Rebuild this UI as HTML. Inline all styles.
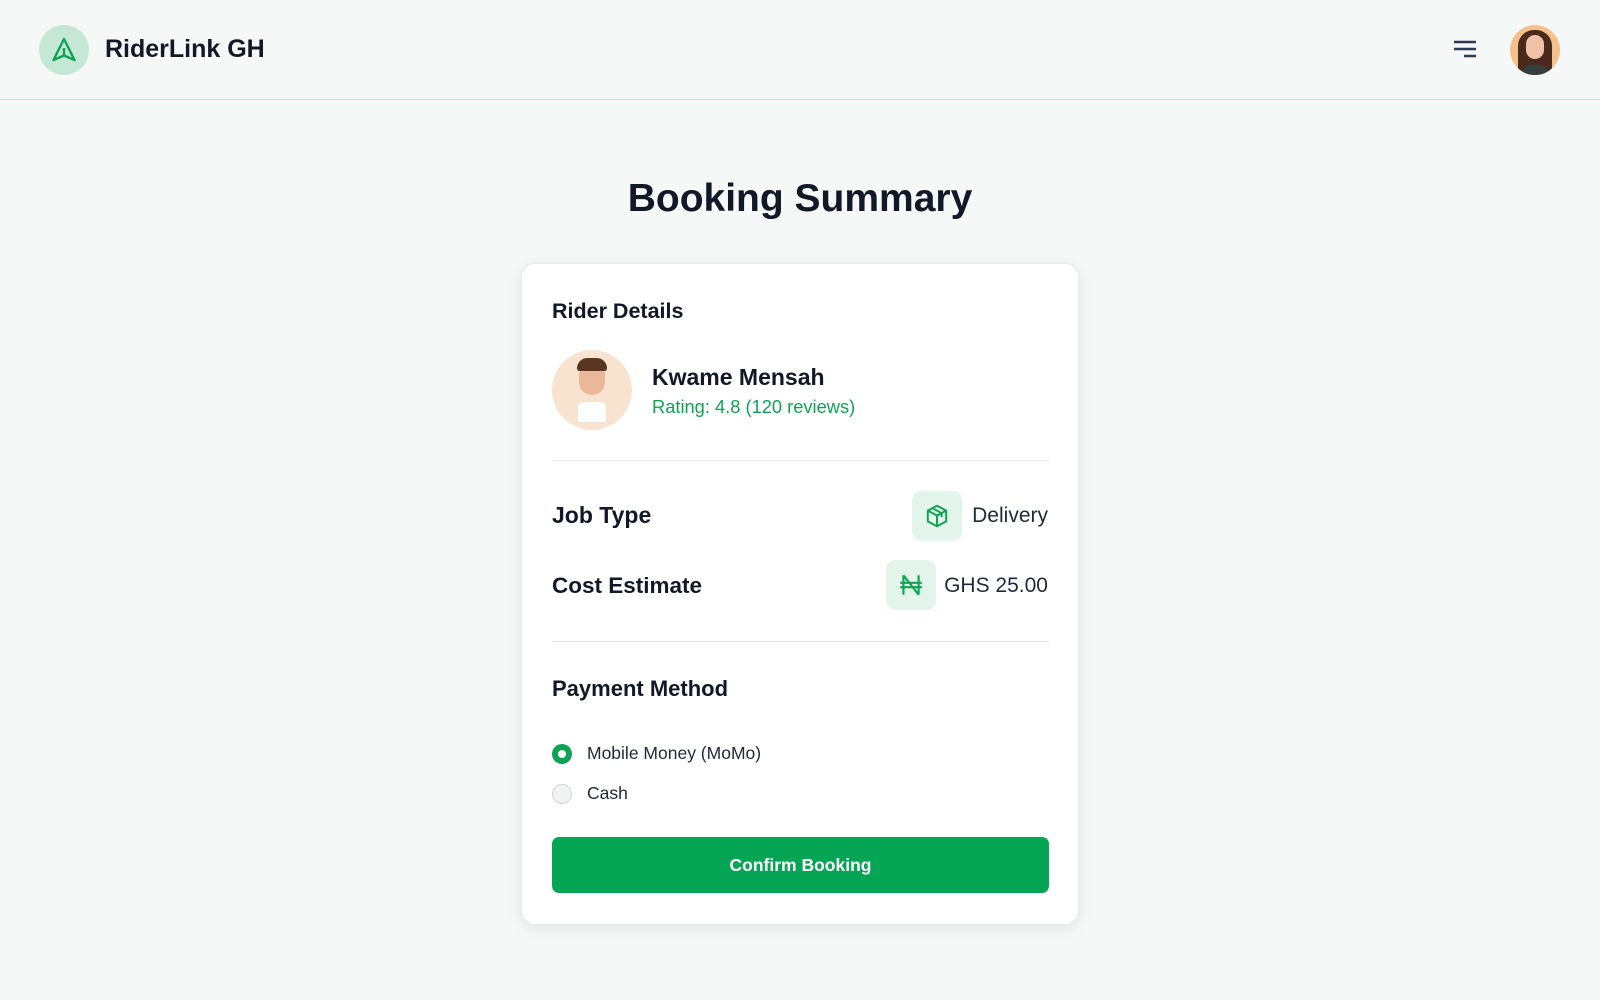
<!DOCTYPE html>
<html><head><meta charset="utf-8"><style>
*{margin:0;padding:0;box-sizing:border-box}
body{width:1600px;height:1000px;background:#f6f7f7;font-family:"Liberation Sans",sans-serif;color:#111827;position:relative;overflow:hidden}
.hdr{position:absolute;left:0;top:0;width:1600px;height:100px;border-bottom:1px solid #bfe6d1}
.abs{position:absolute}
.card{position:absolute;left:521px;top:263px;width:558px;height:662px;background:#fff;border:1px solid #e5e7eb;border-radius:14px;box-shadow:0 4px 14px rgba(0,0,0,0.08)}
.ib{position:absolute;width:50px;height:50px;border-radius:9px;background:#e3f5eb;display:flex;align-items:center;justify-content:center}
.lbl{position:absolute;left:30px;font-weight:bold;font-size:22.5px}
.hr{position:absolute;left:30px;width:497px;height:1px;background:#e5e7eb}
</style></head><body>
<div class="hdr">
 <div class="abs" style="left:39px;top:25px;width:50px;height:50px;border-radius:50%;background:#c5e8d6"></div>
 <svg class="abs" style="left:50px;top:36px" width="28" height="28" viewBox="0 0 28 28"><path d="M14 3 L24.5 24 L14 19.5 L3.5 24 Z M14 12 V19.5" fill="none" stroke="#0ea354" stroke-width="2.4" stroke-linejoin="round"/></svg>
 <div class="abs" style="left:105px;top:35px;font-size:25px;font-weight:bold;color:#111827">RiderLink GH</div>
 <svg class="abs" style="left:1452px;top:40px" width="26" height="20"><path d="M2 2H24M2 9H24M12 16H24" stroke="#2d3a52" stroke-width="2.4"/></svg>
 <div class="abs" style="left:1510px;top:25px;width:50px;height:50px;border-radius:50%;background:#f4c18d;overflow:hidden">
  <div class="abs" style="left:8px;top:5px;width:34px;height:45px;border-radius:16px 16px 4px 4px;background:#4a2a1c"></div>
  <div class="abs" style="left:16px;top:10px;width:18px;height:24px;border-radius:9px;background:#f0c2a8"></div>
  <div class="abs" style="left:12px;top:40px;width:26px;height:12px;border-radius:8px 8px 0 0;background:#34403f"></div>
 </div>
</div>
<div class="abs" style="left:0;width:1600px;top:177px;text-align:center;font-size:39px;font-weight:bold;color:#111827">Booking Summary</div>
<div class="card">
 <div class="abs" style="left:30px;top:35px;font-size:21.5px;font-weight:bold">Rider Details</div>
 <div class="abs" style="left:30px;top:86px;width:80px;height:80px;border-radius:50%;background:#f7e3cf;overflow:hidden">
  <div class="abs" style="left:27px;top:13px;width:26px;height:32px;border-radius:12px 12px 13px 13px;background:#eab898"></div>
  <div class="abs" style="left:25px;top:8px;width:30px;height:13px;border-radius:12px 12px 3px 3px;background:#5a3523"></div>
  <div class="abs" style="left:26px;top:52px;width:28px;height:20px;background:#fff;border-radius:6px 6px 0 0"></div>
 </div>
 <div class="abs" style="left:130px;top:100px;font-size:23px;font-weight:bold">Kwame Mensah</div>
 <div class="abs" style="left:130px;top:132px;font-size:18.3px;color:#0ea354">Rating: 4.8 (120 reviews)</div>
 <div class="hr" style="top:196px"></div>
 <div class="lbl" style="top:238px;font-size:23px">Job Type</div>
 <div class="ib" style="left:390px;top:227px"><svg width="26" height="26" viewBox="0 0 24 24" fill="none" stroke="#0ea354" stroke-width="1.8" stroke-linejoin="round"><path d="M12 2.5 L20.5 7 V17 L12 21.5 L3.5 17 V7 Z M3.5 7 L12 11.5 L20.5 7 M12 11.5 V21.5 M7.8 4.8 L16.2 9.3 V13"/></svg></div>
 <div class="abs" style="right:30px;top:240px;font-size:21px;color:#1f2937">Delivery</div>
 <div class="lbl" style="top:309px">Cost Estimate</div>
 <div class="ib" style="left:364px;top:296px"><svg width="26" height="26" viewBox="0 0 24 24" fill="none" stroke="#0ea354" stroke-width="2"><path d="M5 3 V21 M5 3 L19 21 M19 3 V21 M2 10 H22 M2 14 H22"/></svg></div>
 <div class="abs" style="right:30px;top:310px;font-size:21px;color:#1f2937">GHS 25.00</div>
 <div class="hr" style="top:377px"></div>
 <div class="abs" style="left:30px;top:412px;font-size:22px;font-weight:bold">Payment Method</div>
 <div class="abs" style="left:30px;top:480px;width:20px;height:20px;border-radius:50%;background:#0ea354"><div class="abs" style="left:6px;top:6px;width:8px;height:8px;border-radius:50%;background:#fff"></div></div>
 <div class="abs" style="left:65px;top:479px;font-size:17.5px;color:#1f2937">Mobile Money (MoMo)</div>
 <div class="abs" style="left:30px;top:520px;width:20px;height:20px;border-radius:50%;background:#f1f2f4;border:1px solid #d1d5db"></div>
 <div class="abs" style="left:65px;top:519px;font-size:17.5px;color:#1f2937">Cash</div>
 <div class="abs" style="left:30px;top:573px;width:497px;height:56px;border-radius:7px;background:#06a455;color:#fff;font-size:17.5px;font-weight:bold;display:flex;align-items:center;justify-content:center">Confirm Booking</div>
</div>
</body></html>
